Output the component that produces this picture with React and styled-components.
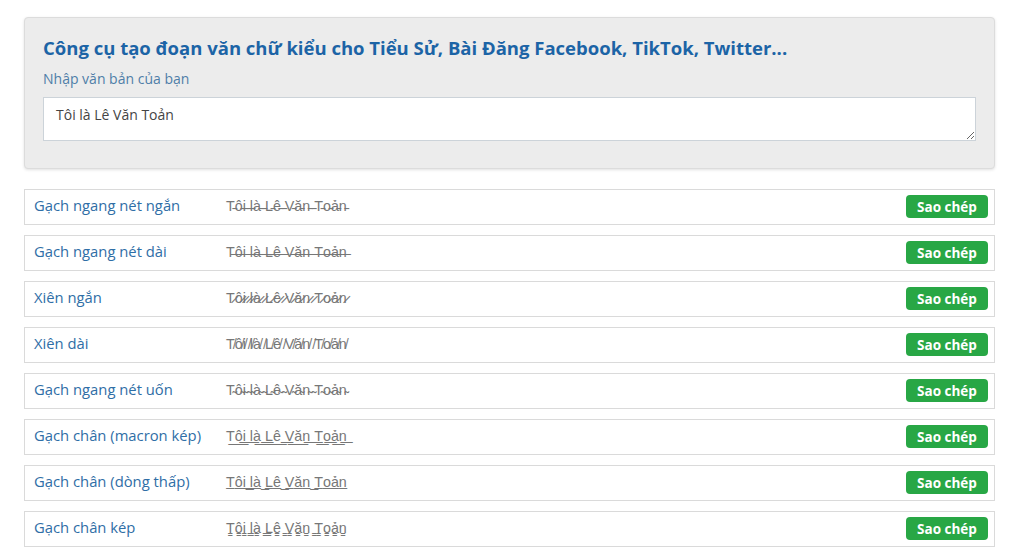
import React, { useState } from "react";
import styled, { createGlobalStyle } from "styled-components";

const GlobalStyle = createGlobalStyle`
  body {
    margin: 0;
    background: #fff;
    font-family: "Open Sans", "Noto Sans", sans-serif;
  }
`;

const Page = styled.div`
  padding: 17px 29px 0 24px;
  display: flex;
  flex-direction: column;
  gap: 20px;
`;

const Panel = styled.div`
  background: #ececec;
  border: 1px solid #dcdcdc;
  border-radius: 4px;
  box-shadow: 0 1px 3px rgba(0, 0, 0, 0.12);
  padding: 18px 18px 27px;
`;

const Title = styled.h1`
  margin: 0;
  font-size: 18.5px;
  line-height: 24px;
  font-weight: 700;
  color: #1c64a6;
`;

const InputLabel = styled.label`
  display: block;
  margin: 9px 0 8px;
  font-size: 14px;
  line-height: 20px;
  color: #4f7ea8;
`;

const TextArea = styled.textarea`
  display: block;
  box-sizing: border-box;
  width: 100%;
  height: 44px;
  padding: 7px 12px;
  border: 1px solid #ccd3d9;
  border-radius: 0;
  font-family: "Open Sans", "Noto Sans", sans-serif;
  font-size: 14px;
  line-height: 20px;
  color: #444;
  background: #fff;
  resize: vertical;
  outline: none;
`;

const List = styled.div`
  display: flex;
  flex-direction: column;
  gap: 10px;
`;

const Row = styled.div`
  display: flex;
  align-items: center;
  height: 36px;
  box-sizing: border-box;
  border: 1px solid #dadada;
  padding: 0 6px 0 9px;
`;

const RowName = styled.div`
  width: 192px;
  flex-shrink: 0;
  margin-top: -4px;
  font-size: 14.8px;
  color: #2f6ea6;
`;

const Sample = styled.div`
  flex: 1;
  margin-top: -3px;
  font-family: "Liberation Sans", Arial, sans-serif;
  font-size: 14.3px;
  color: #777;
  white-space: nowrap;
`;

const CopyButton = styled.button`
  width: 82px;
  height: 23px;
  margin-top: -1px;
  padding: 0;
  border: none;
  border-radius: 4px;
  background: #28a745;
  color: #fff;
  font-family: "Open Sans", "Noto Sans", sans-serif;
  font-size: 13.5px;
  font-weight: 700;
  cursor: pointer;
`;

const styles = [
  { name: "Gạch ngang nét ngắn", mark: "\u0335" },
  { name: "Gạch ngang nét dài", mark: "\u0336" },
  { name: "Xiên ngắn", mark: "\u0337" },
  { name: "Xiên dài", mark: "\u0338" },
  { name: "Gạch ngang nét uốn", mark: "\u0334" },
  { name: "Gạch chân (macron kép)", mark: "\u035F" },
  { name: "Gạch chân (dòng thấp)", mark: "\u0332" },
  { name: "Gạch chân kép", mark: "\u0333" },
];

const decorate = (text, mark) =>
  Array.from(text.normalize("NFC")).map((ch) => ch + mark).join("");

const App = () => {
  const [text, setText] = useState("Tôi là Lê Văn Toản");

  return (
    <Page>
      <GlobalStyle />
      <Panel>
        <Title>Công cụ tạo đoạn văn chữ kiểu cho Tiểu Sử, Bài Đăng Facebook, TikTok, Twitter...</Title>
        <InputLabel htmlFor="src">Nhập văn bản của bạn</InputLabel>
        <TextArea id="src" value={text} onChange={(e) => setText(e.target.value)} />
      </Panel>
      <List>
        {styles.map((s) => {
          const out = decorate(text, s.mark);
          return (
            <Row key={s.name}>
              <RowName>{s.name}</RowName>
              <Sample>{out}</Sample>
              <CopyButton onClick={() => navigator.clipboard?.writeText(out)}>Sao chép</CopyButton>
            </Row>
          );
        })}
      </List>
    </Page>
  );
};

export default App;
